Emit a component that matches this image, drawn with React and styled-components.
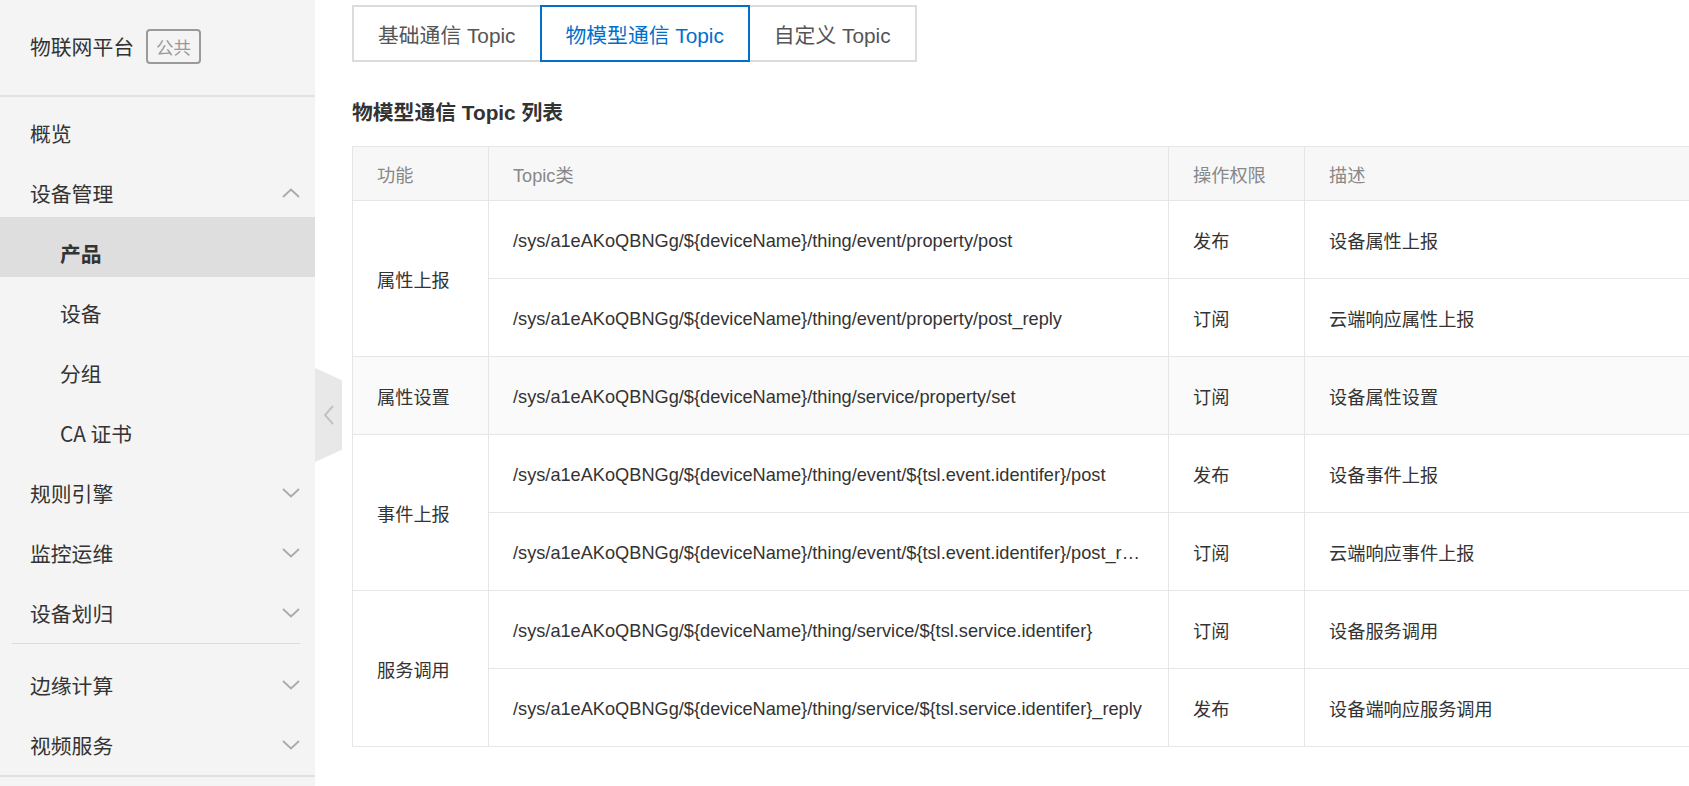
import React from "react";
import styled, { createGlobalStyle } from "styled-components";

const Global = createGlobalStyle`
  html, body { margin: 0; padding: 0; height: 100%; overflow: hidden; background: #fff; }
  body { font-family: "Liberation Sans", "Noto Sans CJK SC", sans-serif; color: #333; }
  #root { height: 100%; }
  * { box-sizing: border-box; }
`;

const Page = styled.div`
  display: flex;
  height: 100vh;
`;

const Sidebar = styled.aside`
  position: relative;
  width: 315px;
  flex-shrink: 0;
  background: #f4f4f4;
  display: flex;
  flex-direction: column;
`;

const Brand = styled.div`
  height: 97px;
  display: flex;
  align-items: center;
  padding: 0 0 3px 30px;
  border-bottom: 2px solid #e2e2e2;
`;

const BrandTitle = styled.span`
  font-family: "Noto Sans CJK SC", sans-serif;
  font-size: 20.8px;
  color: #333;
`;

const Badge = styled.span`
  margin-left: 12px;
  height: 35px;
  padding: 0 8px;
  display: inline-flex;
  align-items: center;
  border: 2px solid #9a9a9a;
  border-radius: 4px;
  font-family: "Noto Sans CJK SC", sans-serif;
  font-size: 17.5px;
  color: #999;
`;

const NavItem = styled.div`
  height: 60px;
  display: flex;
  align-items: center;
  justify-content: space-between;
  padding: 12px 15px 0 ${(p) => (p.$sub ? 60 : 30)}px;
  font-size: 20.8px;
  font-family: "Noto Sans CJK SC", sans-serif;
  font-weight: ${(p) => (p.$active ? 700 : 400)};
  color: #333;
  background: ${(p) => (p.$active ? "#dedede" : "transparent")};
`;

const NavDivider = styled.div`
  height: 1px;
  margin: 6px 15px 5px 12px;
  background: #dcdcdc;
`;

const NavBottom = styled.div`
  margin-top: 6px;
  height: 2px;
  background: #e0e0e0;
`;

const Handle = styled.div`
  position: absolute;
  left: 315px;
  top: 368px;
  width: 27px;
  height: 94px;
  background: #e8e8e8;
  clip-path: polygon(0 0, 100% 13%, 100% 87%, 0 100%);
  display: flex;
  align-items: center;
  justify-content: center;
`;

const Main = styled.main`
  flex: 1;
  min-width: 0;
  overflow: hidden;
  padding: 5px 0 0 37px;
`;

const Tabs = styled.div`
  display: flex;
  height: 57px;
`;

const Tab = styled.div`
  position: relative;
  z-index: ${(p) => (p.$active ? 1 : 0)};
  margin-left: ${(p) => (p.$first ? 0 : -2)}px;
  display: flex;
  align-items: center;
  padding: 0 24px;
  border: 2px solid ${(p) => (p.$active ? "#0070cc" : "#dcdcdc")};
  font-size: 20.8px;
  color: ${(p) => (p.$active ? "#0070cc" : "#555")};
  white-space: nowrap;
`;

const Heading = styled.h2`
  margin: 37px 0 19px;
  font-size: 20.8px;
  line-height: 28px;
  font-weight: 700;
  color: #333;
`;

const Table = styled.table`
  width: calc(100% + 24px);
  border-collapse: collapse;
  table-layout: fixed;
  font-size: 18.2px;
`;

const Th = styled.th`
  height: 54px;
  padding: 0 24px;
  text-align: left;
  font-weight: 400;
  color: #888;
  background: #f7f7f7;
  border: 1px solid #e6e6e6;
`;

const Row = styled.tr`
  background: ${(p) => (p.$hover ? "#fafafa" : "#fff")};
`;

const Td = styled.td`
  height: 78px;
  padding: ${(p) => (p.$path ? "3px 24px 0" : "0 24px")};
  color: #333;
  border: 1px solid #e6e6e6;
  vertical-align: middle;
  white-space: nowrap;
  overflow: hidden;
  text-overflow: ellipsis;
`;

const Chevron = ({ up }) => (
  <svg width="18" height="10" viewBox="0 0 18 10" fill="none">
    <polyline
      points={up ? "1,9 9,1.5 17,9" : "1,1 9,8.5 17,1"}
      stroke="#aaa"
      strokeWidth="1.8"
    />
  </svg>
);

const nav = [
  { label: "概览" },
  { label: "设备管理", chev: "up" },
  { label: "产品", sub: true, active: true },
  { label: "设备", sub: true },
  { label: "分组", sub: true },
  { label: "CA 证书", sub: true },
  { label: "规则引擎", chev: "down" },
  { label: "监控运维", chev: "down" },
  { label: "设备划归", chev: "down" },
  { divider: true },
  { label: "边缘计算", chev: "down" },
  { label: "视频服务", chev: "down" },
];

const P = "/sys/a1eAKoQBNGg/${deviceName}/thing/";

const groups = [
  {
    name: "属性上报",
    rows: [
      [P + "event/property/post", "发布", "设备属性上报"],
      [P + "event/property/post_reply", "订阅", "云端响应属性上报"],
    ],
  },
  {
    name: "属性设置",
    hover: true,
    rows: [[P + "service/property/set", "订阅", "设备属性设置"]],
  },
  {
    name: "事件上报",
    rows: [
      [P + "event/${tsl.event.identifer}/post", "发布", "设备事件上报"],
      [P + "event/${tsl.event.identifer}/post_reply", "订阅", "云端响应事件上报"],
    ],
  },
  {
    name: "服务调用",
    rows: [
      [P + "service/${tsl.service.identifer}", "订阅", "设备服务调用"],
      [P + "service/${tsl.service.identifer}_reply", "发布", "设备端响应服务调用"],
    ],
  },
];

export default function App() {
  return (
    <>
      <Global />
      <Page>
        <Sidebar>
          <Brand>
            <BrandTitle>物联网平台</BrandTitle>
            <Badge>公共</Badge>
          </Brand>
          {nav.map((n, i) =>
            n.divider ? (
              <NavDivider key={i} />
            ) : (
              <NavItem key={i} $sub={n.sub} $active={n.active}>
                <span>{n.label}</span>
                {n.chev && <Chevron up={n.chev === "up"} />}
              </NavItem>
            )
          )}
          <NavBottom />
          <Handle>
            <svg width="12" height="20" viewBox="0 0 12 20" fill="none">
              <polyline points="10,1 2,10 10,19" stroke="#c2c2c2" strokeWidth="2" />
            </svg>
          </Handle>
        </Sidebar>
        <Main>
          <Tabs>
            <Tab $first>基础通信 Topic</Tab>
            <Tab $active>物模型通信 Topic</Tab>
            <Tab>自定义 Topic</Tab>
          </Tabs>
          <Heading>物模型通信 Topic 列表</Heading>
          <Table>
            <colgroup>
              <col style={{ width: 136 }} />
              <col style={{ width: 680 }} />
              <col style={{ width: 136 }} />
              <col />
            </colgroup>
            <thead>
              <tr>
                <Th>功能</Th>
                <Th>Topic类</Th>
                <Th>操作权限</Th>
                <Th>描述</Th>
              </tr>
            </thead>
            <tbody>
              {groups.map((g) =>
                g.rows.map((r, j) => (
                  <Row key={g.name + j} $hover={g.hover}>
                    {j === 0 && <Td rowSpan={g.rows.length}>{g.name}</Td>}
                    <Td $path>{r[0]}</Td>
                    <Td>{r[1]}</Td>
                    <Td>{r[2]}</Td>
                  </Row>
                ))
              )}
            </tbody>
          </Table>
        </Main>
      </Page>
    </>
  );
}
